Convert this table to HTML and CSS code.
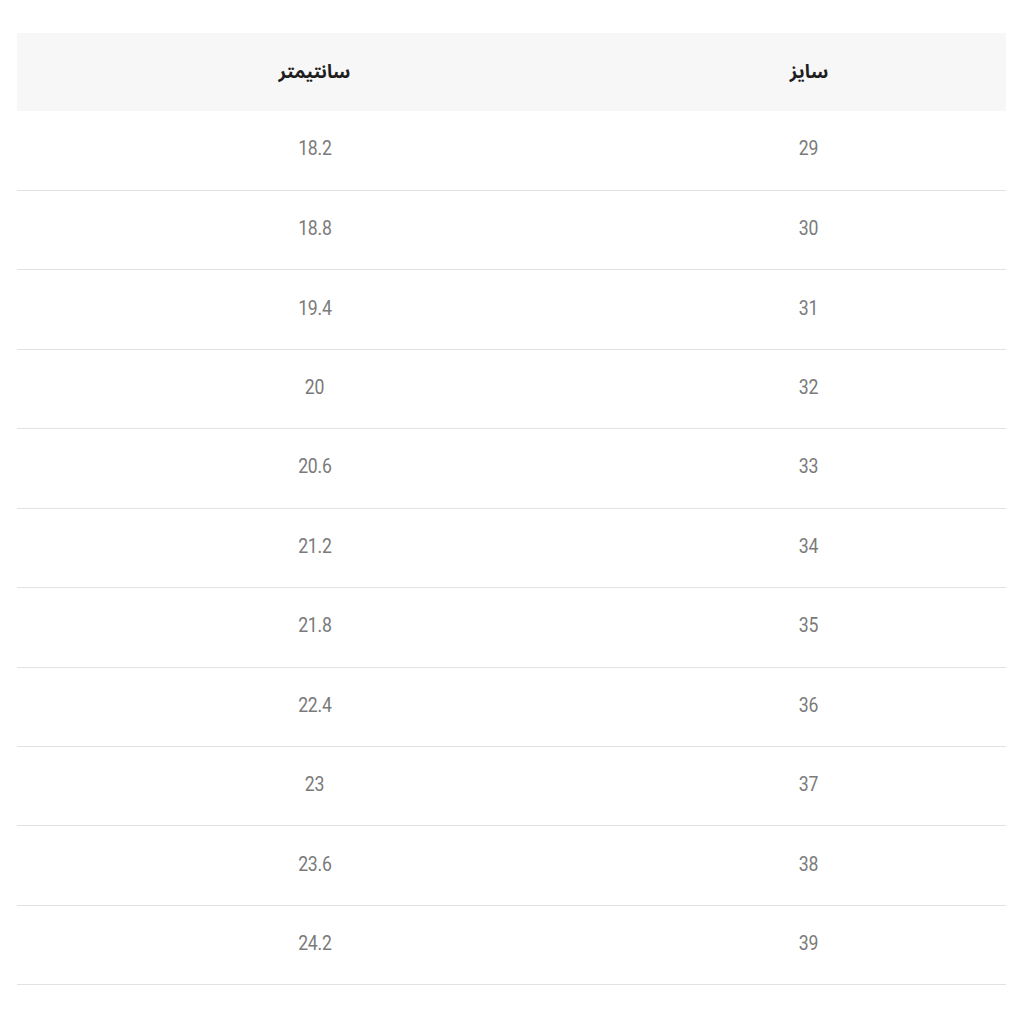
FILE: index.html
```html
<!DOCTYPE html>
<html lang="fa" dir="rtl">
<head>
<meta charset="utf-8">
<link rel="stylesheet" href="styles.css">
</head>
<body>
<div class="wrap">
<table class="size-table">
<thead>
<tr><th class="col-size">سایز</th><th class="col-cm">سانتیمتر</th></tr>
</thead>
<tbody>
<tr><td><span class="num">29</span></td><td><span class="num">18.2</span></td></tr>
<tr><td><span class="num">30</span></td><td><span class="num">18.8</span></td></tr>
<tr><td><span class="num">31</span></td><td><span class="num">19.4</span></td></tr>
<tr><td><span class="num">32</span></td><td><span class="num">20</span></td></tr>
<tr><td><span class="num">33</span></td><td><span class="num">20.6</span></td></tr>
<tr><td><span class="num">34</span></td><td><span class="num">21.2</span></td></tr>
<tr><td><span class="num">35</span></td><td><span class="num">21.8</span></td></tr>
<tr><td><span class="num">36</span></td><td><span class="num">22.4</span></td></tr>
<tr><td><span class="num">37</span></td><td><span class="num">23</span></td></tr>
<tr><td><span class="num">38</span></td><td><span class="num">23.6</span></td></tr>
<tr><td><span class="num">39</span></td><td><span class="num">24.2</span></td></tr>
</tbody>
</table>
</div>
</body>
</html>
```
FILE: styles.css
```css
html, body {
  margin: 0;
  padding: 0;
  background: #ffffff;
}
.wrap {
  padding: 33px 18px 0 17px;
}
.size-table {
  width: 989px;
  border-collapse: collapse;
  table-layout: fixed;
}
.col-size {
  width: 394px;
}
.size-table th {
  background: #f7f7f7;
  height: 78px;
  padding: 0;
  font-family: "Noto Sans Arabic", "DejaVu Sans", sans-serif;
  font-weight: 700;
  font-size: 18.5px;
  color: #1e1e1e;
  text-align: center;
  vertical-align: middle;
}
.size-table td {
  height: 79.45px;
  padding: 0 0 4px 0;
  border-bottom: 1px solid #e2e2e2;
  font-family: Roboto, "Liberation Sans", sans-serif;
  font-size: 21px;
  color: #7a7a7a;
  text-align: center;
  vertical-align: middle;
  box-sizing: border-box;
}
.num {
  display: inline-block;
  transform: scaleX(0.84);
  letter-spacing: -0.3px;
}
```
